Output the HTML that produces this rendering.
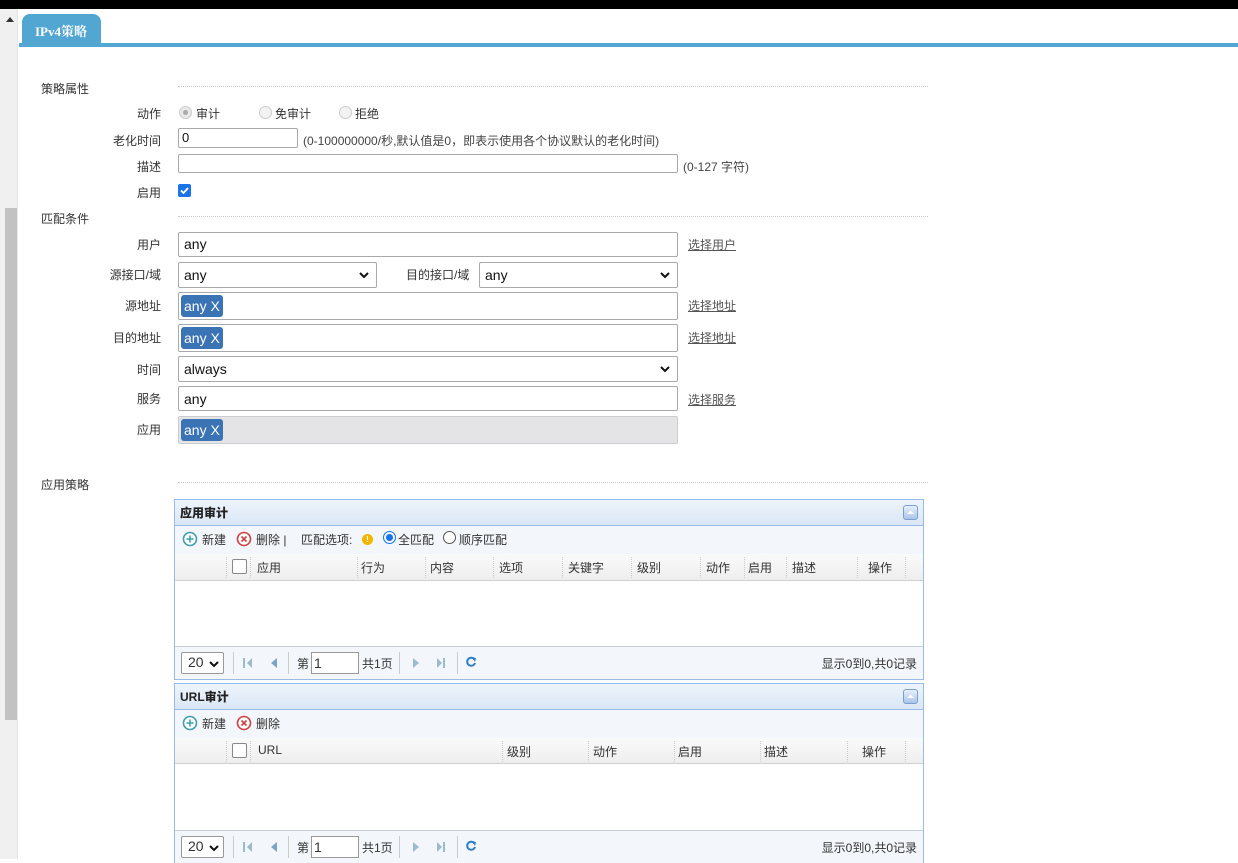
<!DOCTYPE html>
<html><head><meta charset="utf-8"><style>
*{box-sizing:border-box;margin:0;padding:0}
body{width:1238px;height:859px;overflow:hidden;background:#fff;position:relative;font-family:"Liberation Sans","Noto Sans CJK SC",sans-serif;font-size:12px;color:#333}
.a{position:absolute;white-space:nowrap}
.lbl{position:absolute;width:60px;text-align:right;left:101px}
.inp{position:absolute;border:1px solid #a9a9a9;border-radius:2px;background:#fff;font-size:14px;color:#111;padding-left:5px}
.tag{display:inline-block;background:#3b74b5;color:#fff;border-radius:3px;padding:0 3px;font-size:14px;line-height:22px;margin:2px 0 0 1px}
.chev{position:absolute;right:6px;top:4px}
.dot{position:absolute;border-top:1px dotted #ccc;height:0}
.lnk{position:absolute;color:#555;text-decoration:underline}
.panel{position:absolute;left:174px;width:750px;border:1px solid #99bbe8;background:#fff}
.ph{position:absolute;left:0;top:0;right:0;height:26px;background:linear-gradient(#eef4fb,#dae7f6);border-bottom:1px solid #99bbe8;font-weight:bold;font-size:12px;padding:4px 0 0 5px;color:#15428b}
.ph b{color:#222}
.tb{position:absolute;left:0;right:0;height:28px;background:#f3f6fa}
.ch{position:absolute;left:0;right:0;height:27px;background:linear-gradient(#fafafa,#eee);border-bottom:1px solid #d0d0d0}
.sep{position:absolute;top:3px;height:21px;border-left:1px dotted #ccc}
.pg{position:absolute;left:0;right:0;height:33px;background:#f3f6fa;border-top:1px solid #ccd}
.vs{position:absolute;top:5px;height:22px;border-left:1px solid #ccc}
.cb{position:absolute;width:15px;height:15px;border:1px solid #888;border-radius:2px;background:#fff}
</style></head><body>
<div class="a" style="left:0;top:0;width:1238px;height:9px;background:#000"></div>
<div class="a" style="left:0;top:9px;width:18px;height:850px;background:#f0f0f0;border-right:1px solid #e6e6e6"></div>
<div class="a" style="left:5px;top:208px;width:12px;height:512px;background:#c2c2c2"></div>
<div class="a" style="left:6px;top:17px;width:0;height:0;border-left:4px solid transparent;border-right:4px solid transparent;border-bottom:5px solid #333"></div>

<div class="a" style="left:22px;top:14px;width:79px;height:31px;background:#52a7d2;border-radius:8px 8px 0 0;color:#fff;font-weight:bold;font-family:'Liberation Serif','Noto Serif CJK SC',serif;font-size:13px;padding:7px 0 0 13px">IPv4策略</div>
<div class="a" style="left:19px;top:43px;width:1219px;height:4px;background:#52a7d2"></div>

<div class="a" style="left:41px;top:80px">策略属性</div>
<div class="dot" style="left:178px;top:86px;width:750px"></div>
<div class="lbl" style="top:105px">动作</div>
<div class="a" style="left:179px;top:106px;width:13px;height:13px;border-radius:50%;border:1px solid #ccc;background:#e8e8e8"><div style="margin:3px;width:5px;height:5px;border-radius:50%;background:#aaa"></div></div>
<div class="a" style="left:196px;top:105px">审计</div>
<div class="a" style="left:259px;top:106px;width:13px;height:13px;border-radius:50%;border:1px solid #ccc;background:#f2f2f2"></div>
<div class="a" style="left:275px;top:105px">免审计</div>
<div class="a" style="left:339px;top:106px;width:13px;height:13px;border-radius:50%;border:1px solid #ccc;background:#f2f2f2"></div>
<div class="a" style="left:355px;top:105px">拒绝</div>
<div class="lbl" style="top:132px">老化时间</div>
<div class="inp" style="left:178px;top:128px;width:120px;height:20px;font-size:13px;line-height:17px;padding-left:3px">0</div>
<div class="a" style="left:303px;top:132px;color:#444">(0-100000000/秒,默认值是0，即表示使用各个协议默认的老化时间)</div>
<div class="lbl" style="top:158px">描述</div>
<div class="inp" style="left:178px;top:154px;width:500px;height:19px"></div>
<div class="a" style="left:683px;top:158px;color:#444">(0-127 字符)</div>
<div class="lbl" style="top:184px">启用</div>
<div class="a" style="left:178px;top:184px;width:13px;height:13px;background:#1a73e8;border-radius:2px"><svg width="13" height="13"><path d="M3 6.5l2.5 2.5 4.5-5" stroke="#fff" stroke-width="1.8" fill="none"/></svg></div>

<div class="a" style="left:41px;top:210px">匹配条件</div>
<div class="dot" style="left:178px;top:216px;width:750px"></div>
<div class="lbl" style="top:236px">用户</div>
<div class="inp" style="left:178px;top:232px;width:500px;height:25px;line-height:23px">any</div>
<a class="lnk" style="left:688px;top:236px">选择用户</a>
<div class="lbl" style="top:266px">源接口/域</div>
<div class="inp" style="left:178px;top:262px;width:199px;height:26px;line-height:25px">any<svg class="chev" width="12" height="16"><path d="M2 6l4 4 4-4" stroke="#111" stroke-width="2" fill="none"/></svg></div>
<div class="a" style="left:406px;top:266px">目的接口/域</div>
<div class="inp" style="left:479px;top:262px;width:199px;height:26px;line-height:25px">any<svg class="chev" width="12" height="16"><path d="M2 6l4 4 4-4" stroke="#111" stroke-width="2" fill="none"/></svg></div>
<div class="lbl" style="top:297px">源地址</div>
<div class="inp" style="left:178px;top:292px;width:500px;height:28px;padding-left:1px"><span class="tag">any X</span></div>
<a class="lnk" style="left:688px;top:297px">选择地址</a>
<div class="lbl" style="top:329px">目的地址</div>
<div class="inp" style="left:178px;top:324px;width:500px;height:28px;padding-left:1px"><span class="tag">any X</span></div>
<a class="lnk" style="left:688px;top:329px">选择地址</a>
<div class="lbl" style="top:361px">时间</div>
<div class="inp" style="left:178px;top:356px;width:500px;height:26px;line-height:25px">always<svg class="chev" width="12" height="16"><path d="M2 6l4 4 4-4" stroke="#111" stroke-width="2" fill="none"/></svg></div>
<div class="lbl" style="top:390px">服务</div>
<div class="inp" style="left:178px;top:386px;width:500px;height:25px;line-height:24px">any</div>
<a class="lnk" style="left:688px;top:391px">选择服务</a>
<div class="lbl" style="top:421px">应用</div>
<div class="inp" style="left:178px;top:416px;width:500px;height:28px;padding-left:1px;background:#e4e4e6;border-color:#ccc"><span class="tag">any X</span></div>

<div class="a" style="left:41px;top:476px">应用策略</div>
<div class="dot" style="left:178px;top:482px;width:750px"></div>

<!-- Panel 1 -->
<div class="panel" style="top:499px;height:181px">
 <div class="ph"><b>应用审计</b></div>
 <div class="a" style="right:5px;top:5px;width:15px;height:15px;border:1px solid #7a9fd0;border-radius:3px;background:linear-gradient(#e8f0fb,#a9c4ea)"><svg width="13" height="13"><path d="M3 8l3.5-3.5L10 8z" fill="#fff"/></svg></div>
 <div class="tb" style="top:26px">
  <svg class="a" style="left:7px;top:5px" width="16" height="16"><circle cx="8" cy="8" r="6.5" stroke="#3aa0b0" stroke-width="1.6" fill="#fff"/><path d="M8 4.5v7M4.5 8h7" stroke="#3aa0b0" stroke-width="1.6"/></svg>
  <div class="a" style="left:27px;top:5px">新建</div>
  <svg class="a" style="left:61px;top:5px" width="16" height="16"><circle cx="8" cy="8" r="6.5" stroke="#d04040" stroke-width="1.6" fill="#fff"/><path d="M5.5 5.5l5 5M10.5 5.5l-5 5" stroke="#d04040" stroke-width="1.6"/></svg>
  <div class="a" style="left:81px;top:5px">删除 |</div>
  <div class="a" style="left:126px;top:5px">匹配选项:</div>
  <div class="a" style="left:187px;top:8px;width:11px;height:11px;border-radius:50%;background:#f2b500;color:#fff;font-size:8px;text-align:center;line-height:11px;font-weight:bold">!</div>
  <div class="a" style="left:208px;top:5px;width:13px;height:13px;border-radius:50%;border:1px solid #1a73e8"><div style="margin:2px;width:7px;height:7px;border-radius:50%;background:#1a73e8"></div></div>
  <div class="a" style="left:223px;top:5px">全匹配</div>
  <div class="a" style="left:268px;top:5px;width:13px;height:13px;border-radius:50%;border:1px solid #555;background:#fff"></div>
  <div class="a" style="left:284px;top:5px">顺序匹配</div>
 </div>
 <div class="ch" style="top:54px">
  <div class="sep" style="left:51px"></div><div class="cb" style="left:57px;top:5px"></div><div class="sep" style="left:75px"></div>
  <div class="a" style="left:82px;top:5px">应用</div><div class="sep" style="left:182px"></div>
  <div class="a" style="left:186px;top:5px">行为</div><div class="sep" style="left:250px"></div>
  <div class="a" style="left:255px;top:5px">内容</div><div class="sep" style="left:318px"></div>
  <div class="a" style="left:324px;top:5px">选项</div><div class="sep" style="left:387px"></div>
  <div class="a" style="left:393px;top:5px">关键字</div><div class="sep" style="left:456px"></div>
  <div class="a" style="left:462px;top:5px">级别</div><div class="sep" style="left:525px"></div>
  <div class="a" style="left:531px;top:5px">动作</div><div class="sep" style="left:569px"></div>
  <div class="a" style="left:573px;top:5px">启用</div><div class="sep" style="left:611px"></div>
  <div class="a" style="left:617px;top:5px">描述</div><div class="sep" style="left:682px"></div>
  <div class="a" style="left:693px;top:5px">操作</div><div class="sep" style="left:730px"></div>
 </div>
 <div class="pg" style="top:146px">
  <div class="a" style="left:6px;top:5px;width:43px;height:22px;border:1px solid #999;border-radius:2px;background:#fff;font-size:14px;padding:1px 0 0 6px">20<svg style="position:absolute;right:4px;top:6px" width="10" height="10"><path d="M1 3l4 4 4-4" stroke="#111" stroke-width="2" fill="none"/></svg></div>
  <div class="vs" style="left:58px"></div>
  <svg class="a" style="left:68px;top:10px" width="10" height="12"><path d="M1 1v10" stroke="#9bc" stroke-width="2"/><path d="M9 1L4 6l5 5z" fill="#9bc"/></svg>
  <svg class="a" style="left:94px;top:10px" width="10" height="12"><path d="M8 1L2 6l6 5z" fill="#7aa3c8"/></svg>
  <div class="vs" style="left:113px"></div>
  <div class="a" style="left:122px;top:8px">第</div>
  <div class="a" style="left:136px;top:5px;width:48px;height:22px;border:1px solid #999;background:#fff;font-size:14px;padding:2px 0 0 2px">1</div>
  <div class="a" style="left:187px;top:8px">共1页</div>
  <div class="vs" style="left:224px"></div>
  <svg class="a" style="left:236px;top:10px" width="10" height="12"><path d="M2 1l6 5-6 5z" fill="#9bc"/></svg>
  <svg class="a" style="left:261px;top:10px" width="10" height="12"><path d="M1 1l5 5-5 5z" fill="#9bc"/><path d="M8 1v10" stroke="#9bc" stroke-width="2"/></svg>
  <div class="vs" style="left:282px"></div>
  <svg class="a" style="left:290px;top:9px" width="12" height="12"><path d="M9.5 3.5A4 4 0 1 0 10 7" stroke="#2d7fc6" stroke-width="2" fill="none"/><path d="M7 1l4 1-1 4z" fill="#2d7fc6"/></svg>
  <div class="a" style="right:6px;top:8px">显示0到0,共0记录</div>
 </div>
</div>

<!-- Panel 2 -->
<div class="panel" style="top:683px;height:180px">
 <div class="ph"><b>URL审计</b></div>
 <div class="a" style="right:5px;top:5px;width:15px;height:15px;border:1px solid #7a9fd0;border-radius:3px;background:linear-gradient(#e8f0fb,#a9c4ea)"><svg width="13" height="13"><path d="M3 8l3.5-3.5L10 8z" fill="#fff"/></svg></div>
 <div class="tb" style="top:26px">
  <svg class="a" style="left:7px;top:5px" width="16" height="16"><circle cx="8" cy="8" r="6.5" stroke="#3aa0b0" stroke-width="1.6" fill="#fff"/><path d="M8 4.5v7M4.5 8h7" stroke="#3aa0b0" stroke-width="1.6"/></svg>
  <div class="a" style="left:27px;top:5px">新建</div>
  <svg class="a" style="left:61px;top:5px" width="16" height="16"><circle cx="8" cy="8" r="6.5" stroke="#d04040" stroke-width="1.6" fill="#fff"/><path d="M5.5 5.5l5 5M10.5 5.5l-5 5" stroke="#d04040" stroke-width="1.6"/></svg>
  <div class="a" style="left:81px;top:5px">删除</div>
 </div>
 <div class="ch" style="top:54px;height:26px">
  <div class="sep" style="left:51px"></div><div class="cb" style="left:57px;top:5px"></div><div class="sep" style="left:75px"></div>
  <div class="a" style="left:83px;top:5px">URL</div><div class="sep" style="left:327px"></div>
  <div class="a" style="left:332px;top:5px">级别</div><div class="sep" style="left:413px"></div>
  <div class="a" style="left:418px;top:5px">动作</div><div class="sep" style="left:499px"></div>
  <div class="a" style="left:503px;top:5px">启用</div><div class="sep" style="left:585px"></div>
  <div class="a" style="left:589px;top:5px">描述</div><div class="sep" style="left:672px"></div>
  <div class="a" style="left:687px;top:5px">操作</div><div class="sep" style="left:730px"></div>
 </div>
 <div class="pg" style="top:146px">
  <div class="a" style="left:6px;top:5px;width:43px;height:22px;border:1px solid #999;border-radius:2px;background:#fff;font-size:14px;padding:1px 0 0 6px">20<svg style="position:absolute;right:4px;top:6px" width="10" height="10"><path d="M1 3l4 4 4-4" stroke="#111" stroke-width="2" fill="none"/></svg></div>
  <div class="vs" style="left:58px"></div>
  <svg class="a" style="left:68px;top:10px" width="10" height="12"><path d="M1 1v10" stroke="#9bc" stroke-width="2"/><path d="M9 1L4 6l5 5z" fill="#9bc"/></svg>
  <svg class="a" style="left:94px;top:10px" width="10" height="12"><path d="M8 1L2 6l6 5z" fill="#7aa3c8"/></svg>
  <div class="vs" style="left:113px"></div>
  <div class="a" style="left:122px;top:8px">第</div>
  <div class="a" style="left:136px;top:5px;width:48px;height:22px;border:1px solid #999;background:#fff;font-size:14px;padding:2px 0 0 2px">1</div>
  <div class="a" style="left:187px;top:8px">共1页</div>
  <div class="vs" style="left:224px"></div>
  <svg class="a" style="left:236px;top:10px" width="10" height="12"><path d="M2 1l6 5-6 5z" fill="#9bc"/></svg>
  <svg class="a" style="left:261px;top:10px" width="10" height="12"><path d="M1 1l5 5-5 5z" fill="#9bc"/><path d="M8 1v10" stroke="#9bc" stroke-width="2"/></svg>
  <div class="vs" style="left:282px"></div>
  <svg class="a" style="left:290px;top:9px" width="12" height="12"><path d="M9.5 3.5A4 4 0 1 0 10 7" stroke="#2d7fc6" stroke-width="2" fill="none"/><path d="M7 1l4 1-1 4z" fill="#2d7fc6"/></svg>
  <div class="a" style="right:6px;top:8px">显示0到0,共0记录</div>
 </div>
</div>
</body></html>
